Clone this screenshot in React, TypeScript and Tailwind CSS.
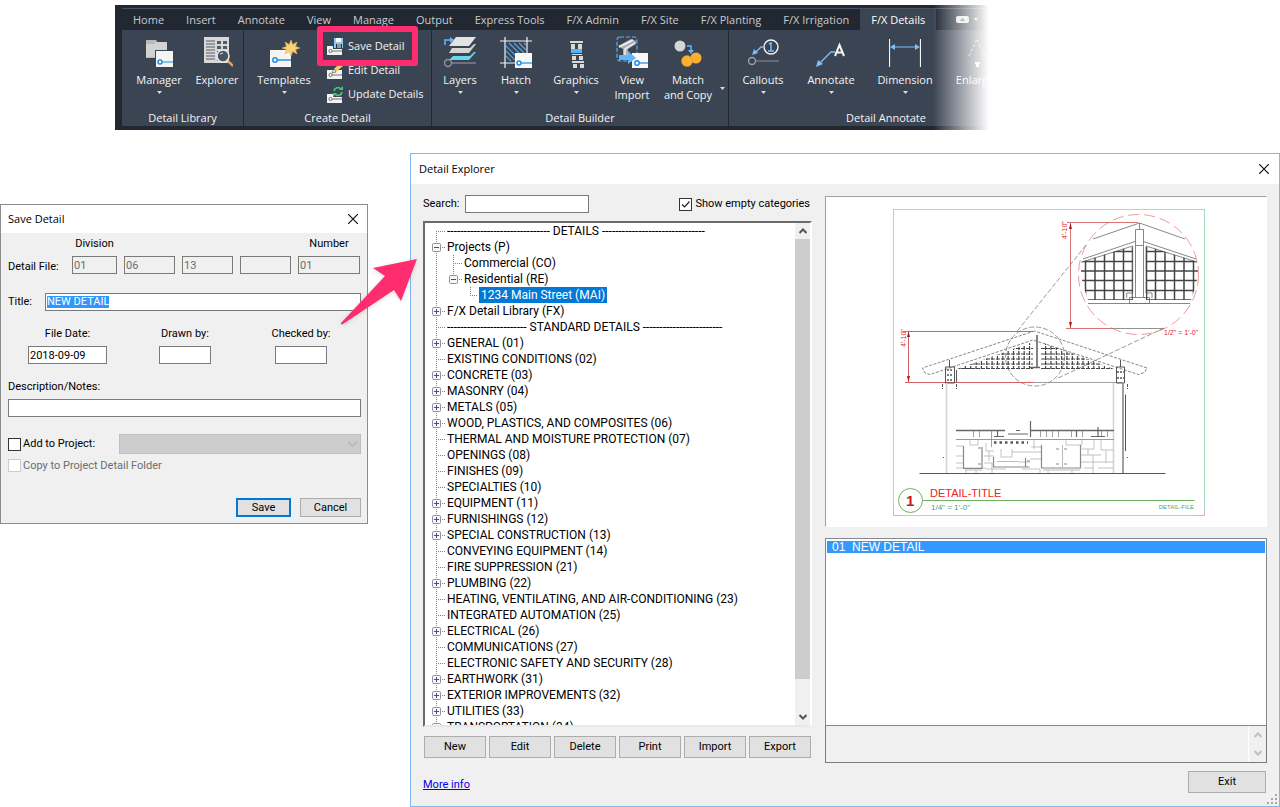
import { useState } from "react";
import type { ReactNode } from "react";

const tabs = [
  "Home",
  "Insert",
  "Annotate",
  "View",
  "Manage",
  "Output",
  "Express Tools",
  "F/X Admin",
  "F/X Site",
  "F/X Planting",
  "F/X Irrigation",
  "F/X Details",
];

type TreeItem = {
  label: string;
  level: number;
  box?: "+" | "-";
  lastChild?: boolean;
};

const treeItems: TreeItem[] = [
  { label: "------------------------------- DETAILS -------------------------------", level: 0 },
  { label: "Projects (P)", level: 0, box: "-" },
  { label: "Commercial (CO)", level: 1 },
  { label: "Residential (RE)", level: 1, box: "-", lastChild: true },
  { label: "1234 Main Street (MAI)", level: 2, lastChild: true },
  { label: "F/X Detail Library (FX)", level: 0, box: "+" },
  { label: "------------------------ STANDARD DETAILS ------------------------", level: 0 },
  { label: "GENERAL (01)", level: 0, box: "+" },
  { label: "EXISTING CONDITIONS (02)", level: 0 },
  { label: "CONCRETE (03)", level: 0, box: "+" },
  { label: "MASONRY (04)", level: 0, box: "+" },
  { label: "METALS (05)", level: 0, box: "+" },
  { label: "WOOD, PLASTICS, AND COMPOSITES (06)", level: 0, box: "+" },
  { label: "THERMAL AND MOISTURE PROTECTION (07)", level: 0 },
  { label: "OPENINGS (08)", level: 0 },
  { label: "FINISHES (09)", level: 0 },
  { label: "SPECIALTIES (10)", level: 0 },
  { label: "EQUIPMENT (11)", level: 0, box: "+" },
  { label: "FURNISHINGS (12)", level: 0, box: "+" },
  { label: "SPECIAL CONSTRUCTION (13)", level: 0, box: "+" },
  { label: "CONVEYING EQUIPMENT (14)", level: 0 },
  { label: "FIRE SUPPRESSION (21)", level: 0 },
  { label: "PLUMBING (22)", level: 0, box: "+" },
  { label: "HEATING, VENTILATING, AND AIR-CONDITIONING (23)", level: 0 },
  { label: "INTEGRATED AUTOMATION (25)", level: 0 },
  { label: "ELECTRICAL (26)", level: 0, box: "+" },
  { label: "COMMUNICATIONS (27)", level: 0 },
  { label: "ELECTRONIC SAFETY AND SECURITY (28)", level: 0 },
  { label: "EARTHWORK (31)", level: 0, box: "+" },
  { label: "EXTERIOR IMPROVEMENTS (32)", level: 0, box: "+" },
  { label: "UTILITIES (33)", level: 0, box: "+" },
  { label: "TRANSPORTATION (34)", level: 0, box: "+" },
];

/* ---------- ribbon icons ---------- */

const Icon = ({ children }: { children: ReactNode }) => (
  <svg width="32" height="32" viewBox="0 0 32 32" fill="none" className="shrink-0">
    {children}
  </svg>
);

const ManagerIcon = () => (
  <Icon>
    <path d="M3 4h10l2 3h9v15H3z" fill="#b9b9b9" />
    <path d="M3 8h8l2-2h11v15H3z" fill="#d2d2d2" />
    <path d="M12 14h19v17H12z" fill="#3b4453" />
    <path d="M13 15h17v16H13z" fill="#f4f4f4" />
    <path d="M19 26h11" stroke="#1f8be0" />
    <circle cx="17" cy="26" r="2" stroke="#1f8be0" strokeWidth="1.5" fill="#fff" />
  </Icon>
);

const ExplorerIcon = () => (
  <Icon>
    <path d="M3 1h25v26H3z" fill="#d8d8d8" />
    <path d="M5 5h9M5 8h9M5 11h9M5 14h9M5 17h9M5 20h9M5 23h9M16 24h4" stroke="#545b68" />
    <path d="M16 5h4v3h-4zM22 5h4v3h-4zM16 10h4v3h-4zM22 10h4v3h-4zM16 15h3v3h-3z" fill="#545b68" />
    <circle cx="22" cy="20" r="6" fill="#4a5361" stroke="#e6e6e6" strokeWidth="1.6" />
    <path d="M19 18l3-1" stroke="#e6e6e6" />
    <path d="M27 25l5 5" stroke="#e8a860" strokeWidth="2.4" />
  </Icon>
);

const TemplatesIcon = () => (
  <Icon>
    <path d="M2 14h21v17H2z" fill="#f4f4f4" />
    <path d="M9 24h14" stroke="#1f8be0" strokeWidth="1.4" />
    <circle cx="7" cy="24" r="2.2" stroke="#1f8be0" strokeWidth="1.5" fill="#fff" />
    <path
      d="M23 4l1.8 4.6L29 6l-1.5 4.4L32 12l-4.5 1.6L29 18l-4.200-2.600L23 20l-1.800-4.600L17 18l1.500-4.400L14 12l4.500-1.600L17 6l4.200 2.600z"
      fill="#f9d275"
      stroke="#e8b04b"
      strokeWidth=".6"
    />
  </Icon>
);

const LayersIcon = () => (
  <Icon>
    <path d="M12 1h20l-7 9H5z" fill="#e3e3e3" />
    <path d="M8 12h18l4-4h2l-7 9H5z" fill="#d6d6d6" />
    <path d="M9 20h17l4-4h2l-7 8H5z" fill="#67d8ee" />
    <path d="M1 9V4h6" stroke="#6ab6f7" strokeWidth="1.5" />
    <path d="M6 1l4 3-4 3z" fill="#6ab6f7" />
    <circle cx="4" cy="27" r="3.500" stroke="#8f959e" strokeWidth="1.4" />
    <path d="M8 27h24" stroke="#9ba0a8" />
  </Icon>
);

const HatchIcon = () => (
  <Icon>
    <path
      d="M6 10l13 13M6 15l9 9M6 20l5 5M9 7l17 17M14 7l12 12M19 7l7 7M24 7l2 2"
      stroke="#5aa4e0"
      strokeWidth="1.2"
    />
    <path d="M5 1v31M0 5h32M27 1v31M0 27h16" stroke="#f4f4f4" strokeWidth="1.2" />
    <path d="M15 17h17v15H15z" fill="#f8f8f8" />
    <path d="M21 27h11" stroke="#1f8be0" strokeWidth="1.2" />
    <circle cx="19" cy="27" r="2" stroke="#1f8be0" strokeWidth="1.4" />
  </Icon>
);

const GraphicsIcon = () => (
  <Icon>
    <path d="M10 5h13v2H10zM11 8h4v5h-4zM18 8h4v5h-4zM12 18h10v1H12zM12 20h4v4h-4zM19 20h4v4h-4zM12 25h12v2H12zM13 28h4v4h-4zM20 28h4v4h-4z" fill="#d9d9d9" />
    <path d="M11 13h11v4H11z" fill="#55b3f7" />
  </Icon>
);

const ViewImportIcon = () => (
  <Icon>
    <path d="M2 10L15 3l5 2v3l-8 5v9H7v-9z" fill="#aeb1b5" />
    <path d="M3 11L17 4M9 22v-9l10-6" stroke="#f2f2f2" strokeWidth="1.4" />
    <rect x="1" y="1" width="20" height="24" rx="3" stroke="#5db0f5" strokeDasharray="4 2" strokeWidth="1.2" />
    <path d="M16 17h16v15H16z" fill="#f8f8f8" />
    <path d="M3 19h9v-4l8 7-8 6v-4H3z" fill="#62b4f8" />
    <path d="M23 27h9" stroke="#1f8be0" strokeWidth="1.2" />
    <circle cx="21" cy="27" r="2.200" stroke="#1f8be0" strokeWidth="1.4" />
  </Icon>
);

const MatchIcon = () => (
  <Icon>
    <circle cx="8" cy="10" r="5.500" fill="#d5d5d5" />
    <path d="M15 10h4v5" stroke="#6ab6f7" strokeWidth="1.4" />
    <path d="M16 14h6l-3 4z" fill="#6ab6f7" />
    <circle cx="24" cy="22" r="5.500" fill="#fbb034" />
    <circle cx="15" cy="25" r="5.500" fill="#fbb034" stroke="#e09420" strokeWidth=".5" />
  </Icon>
);

const CalloutsIcon = () => (
  <Icon>
    <circle cx="24" cy="11" r="7" stroke="#f4f4f4" strokeWidth="1.4" />
    <path d="M22 8l2-1v8M21 15h6" stroke="#7cc0f7" strokeWidth="1.4" />
    <path d="M17 11h-3l-6 6" stroke="#7cc0f7" strokeWidth="1.3" />
    <path d="M5 19l2-6 4 4z" fill="#7cc0f7" />
    <circle cx="5" cy="25" r="3.500" stroke="#9a9fa7" strokeWidth="1.4" />
    <path d="M9 25h23" stroke="#8b919b" />
  </Icon>
);

const AnnotateIcon = () => (
  <Icon>
    <path d="M20 20L24.500 9L29 20M21.500 16.500h6" stroke="#f4f4f4" strokeWidth="2" />
    <path d="M20 16h-4L4 28" stroke="#7cc0f7" strokeWidth="1.3" />
    <path d="M1 31l2-7 5 4z" fill="#7cc0f7" />
  </Icon>
);

const DimensionIcon = () => (
  <Icon>
    <path d="M.5 3v28M31.500 3v28" stroke="#f4f4f4" strokeWidth="1.2" />
    <path d="M3 11h26" stroke="#7cc0f7" />
    <path d="M1 11l5-3v6zM31 11l-5-3v6z" fill="#7cc0f7" />
  </Icon>
);

const EnlargeIcon = () => (
  <Icon>
    <path d="M10 20L18 3l8 17" stroke="#e8d9a8" strokeDasharray="3 2" />
    <path d="M16 26h5v2h-5zM17 28h3v3h-3z" fill="#f4f4f4" />
  </Icon>
);

const SmallDetailIcon = ({ children }: { children: ReactNode }) => (
  <svg width="17" height="17" viewBox="0 0 17 17" fill="none" className="shrink-0">
    <path d="M0 8h15v9H0z" fill="#f2f2f2" />
    <path d="M5 13h10" stroke="#777" />
    <circle cx="3.500" cy="13" r="1.600" stroke="#777" />
    {children}
  </svg>
);

const SaveIcon = () => (
  <SmallDetailIcon>
    <path d="M6 0h11v11H6z" fill="#3b4453" />
    <path d="M7 0h9v10H7z" fill="#8bcaf8" />
    <path d="M9 0h5v4H9z" fill="#fff" />
    <path d="M9 6h6v4H9z" fill="#2b3340" />
    <path d="M10 7h4M10 9h4" stroke="#fff" />
  </SmallDetailIcon>
);

const EditIcon = () => (
  <SmallDetailIcon>
    <path d="M5 11l2-4 6-6 3 3-7 6z" fill="#f3cd63" />
    <path d="M5 11l2-4 2 3z" fill="#fff" stroke="#444" strokeWidth=".6" />
  </SmallDetailIcon>
);

const UpdateIcon = () => (
  <SmallDetailIcon>
    <path d="M6 0h10v11H6z" fill="#3b4453" />
    <path d="M7 5a4 4 0 0 1 7-2M15 6a4 4 0 0 1-7 2" stroke="#43c476" strokeWidth="1.800" />
    <path d="M12 4h4V0zM10 7H6v4z" fill="#43c476" />
  </SmallDetailIcon>
);

/* ---------- ribbon ---------- */

const Caret = () => (
  <svg width="5" height="3" viewBox="0 0 5 3" className="shrink-0">
    <path d="M0 0h5L2.500 3z" fill="#dcdcdc" />
  </svg>
);

const RibbonPanel = ({ title, className, children }: { title: string; className: string; children: ReactNode }) => (
  <section className={`flex shrink-0 flex-col bg-[#3b4453] ${className}`}>
    <div className="flex h-20 items-start pt-1.5">{children}</div>
    <h2 className="text-center leading-4">{title}</h2>
  </section>
);

type RibbonButtonProps = {
  label: string;
  icon: ReactNode;
  width: string;
  caret?: boolean;
};

const RibbonButton = ({ label, icon, width, caret }: RibbonButtonProps) => (
  <button className={`flex shrink-0 flex-col items-center whitespace-pre leading-[15px] hover:bg-white/10 ${width}`}>
    {icon}
    <span className="mt-1">{label}</span>
    {caret && (
      <span className="mt-1">
        <Caret />
      </span>
    )}
  </button>
);

const Ribbon = () => {
  const [activeTab, setActiveTab] = useState("F/X Details");

  return (
    <header className="relative mr-[291px] ml-[115px] overflow-hidden bg-[#212832] pb-1 pl-[7px] font-['Open_Sans','Noto_Sans',sans-serif] text-[11px] text-[#f4f4f4]">
      <div className="h-1 border-b border-[#4b5361]" />
      <nav className="flex h-[21px] items-center">
        {tabs.map((tab) => (
          <button
            key={tab}
            onClick={() => setActiveTab(tab)}
            className={`h-full shrink-0 px-[11px] ${
              tab === activeTab ? "bg-[#3b4453] text-white" : "text-[#c9cbce]"
            }`}
          >
            {tab}
          </button>
        ))}
        <button aria-label="Minimize ribbon" className="ml-5 flex items-center gap-1">
          <svg width="22" height="8" viewBox="0 0 22 8">
            <rect width="13" height="7" rx="2" fill="#e4e4e4" />
            <path d="M4 5l2.500-3L9 5z" fill="#666" />
            <path d="M18 2h4l-2 3z" fill="#e4e4e4" />
          </svg>
        </button>
      </nav>
      <div className="flex h-24 gap-px">
        <RibbonPanel title="Detail Library" className="w-[121px]">
          <div className="flex gap-1 pl-[10px]">
            <RibbonButton label="Manager" icon={<ManagerIcon />} width="w-[54px]" caret />
            <RibbonButton label="Explorer" icon={<ExplorerIcon />} width="w-[54px]" />
          </div>
        </RibbonPanel>
        <RibbonPanel title="Create Detail" className="w-[187px]">
          <div className="flex gap-[13px] pl-[10px]">
            <RibbonButton label="Templates" icon={<TemplatesIcon />} width="w-15" caret />
            <div className="flex flex-col items-start gap-2 pt-0.5">
              <button className="relative flex h-4 items-center gap-1 whitespace-nowrap">
                <SaveIcon />
                Save Detail
                <span className="absolute -inset-y-3 -right-[14px] -left-[10px] z-10 rounded-[3px] border-[6px] border-[#ff2d6f]" />
              </button>
              <button className="flex h-4 items-center gap-1 whitespace-nowrap">
                <EditIcon />
                Edit Detail
              </button>
              <button className="flex h-4 items-center gap-1 whitespace-nowrap">
                <UpdateIcon />
                Update Details
              </button>
            </div>
          </div>
        </RibbonPanel>
        <RibbonPanel title="Detail Builder" className="w-[296px]">
          <RibbonButton label="Layers" icon={<LayersIcon />} width="w-14" caret />
          <RibbonButton label="Hatch" icon={<HatchIcon />} width="w-14" caret />
          <RibbonButton label="Graphics" icon={<GraphicsIcon />} width="w-16" caret />
          <RibbonButton label={"View\nImport"} icon={<ViewImportIcon />} width="w-12" />
          <div className="flex items-end">
            <RibbonButton label={"Match\nand Copy"} icon={<MatchIcon />} width="w-16" />
            <span className="pb-3">
              <Caret />
            </span>
          </div>
        </RibbonPanel>
        <RibbonPanel title="Detail Annotate" className="w-[314px]">
          <RibbonButton label="Callouts" icon={<CalloutsIcon />} width="w-17" caret />
          <RibbonButton label="Annotate" icon={<AnnotateIcon />} width="w-17" caret />
          <RibbonButton label="Dimension" icon={<DimensionIcon />} width="w-20" caret />
          <RibbonButton label="Enlarge" icon={<EnlargeIcon />} width="w-15" />
        </RibbonPanel>
      </div>
      <div className="absolute inset-y-0 right-0 w-14 bg-gradient-to-r from-white/0 to-white" />
    </header>
  );
};

/* ---------- dialogs ---------- */

const CloseButton = () => (
  <button aria-label="Close">
    <svg width="10" height="10" viewBox="0 0 10 10" stroke="#111" strokeWidth="1.200">
      <path d="M0 0l10 10M10 0L0 10" />
    </svg>
  </button>
);

const field = "h-[18px] border border-[#7a7a7a] bg-white px-px outline-none";
const lockedField = "h-[18px] w-full border border-[#7a7a7a] px-px text-[#6d6d6d]";
const pushButton = "border border-[#adadad] bg-[#e1e1e1] text-center hover:bg-[#e5f1fb]";

const SaveDialog = () => (
  <form
    onSubmit={(e) => e.preventDefault()}
    className="mt-[51px] flex w-[368px] shrink-0 flex-col border border-[#8c8c8c] bg-[#f0f0f0]"
  >
    <div className="flex h-7 items-center justify-between bg-white pr-[9px] pl-[7px] font-['Open_Sans','Noto_Sans',sans-serif]">
      <h2>Save Detail</h2>
      <CloseButton />
    </div>

    <div className="flex flex-col pt-[5px] pr-1.5 pb-1.5 pl-[7px] leading-3">
      <div className="grid grid-cols-[57px_45px_51px_51px_51px_62px] items-center gap-x-[7px] gap-y-1.5">
        <label htmlFor="division" className="col-start-2 text-center">Division</label>
        <label htmlFor="number" className="col-start-6 text-center">Number</label>
        <label htmlFor="division" className="col-start-1 whitespace-nowrap pt-1">Detail File:</label>
        <input id="division" disabled defaultValue="01" className={lockedField} />
        <input aria-label="Section" disabled defaultValue="06" className={lockedField} />
        <input aria-label="Subsection" disabled defaultValue="13" className={lockedField} />
        <input aria-label="Suffix" disabled className={lockedField} />
        <input id="number" disabled defaultValue="01" className={lockedField} />
      </div>

      <div className="mt-[19px] flex items-center">
        <label htmlFor="title" className="w-[37px]">Title:</label>
        <div className="flex h-[18px] flex-1 items-center border border-[#7a7a7a] bg-white px-px">
          <input
            id="title"
            defaultValue="NEW DETAIL"
            className="field-sizing-content bg-[#3297fd] text-white outline-none"
          />
        </div>
      </div>

      <div className="mt-[17px] flex pl-5">
        <div className="flex w-[79px] flex-col items-center gap-1.5">
          <label htmlFor="file-date">File Date:</label>
          <input id="file-date" defaultValue="2018-09-09" className={`w-full ${field}`} />
        </div>
        <div className="ml-[52px] flex w-[52px] flex-col items-center gap-1.5 whitespace-nowrap">
          <label htmlFor="drawn-by">Drawn by:</label>
          <input id="drawn-by" className={`w-full ${field}`} />
        </div>
        <div className="ml-16 flex w-[52px] flex-col items-center gap-1.5 whitespace-nowrap">
          <label htmlFor="checked-by">Checked by:</label>
          <input id="checked-by" className={`w-full ${field}`} />
        </div>
      </div>

      <label htmlFor="notes" className="mt-[17px]">Description/Notes:</label>
      <input id="notes" className={`mt-1.5 w-full ${field}`} />

      <div className="mt-[17px] flex items-center justify-between">
        <label className="flex items-center gap-0.5">
          <input type="checkbox" className="size-[13px] appearance-none border border-[#333] bg-white" />
          Add to Project:
        </label>
        <div className="relative">
          <select aria-label="Project" disabled className="block h-5 w-[242px] appearance-none border border-[#bfbfbf] bg-[#cccccc]" />
          <svg width="9" height="5" viewBox="0 0 9 5" fill="none" stroke="#a0a0a0" className="absolute top-2 right-1">
            <path d="M0 0l4.500 4L9 0" />
          </svg>
        </div>
      </div>
      <label className="mt-[5px] flex items-center gap-0.5 text-[#6d6d6d]">
        <input type="checkbox" disabled className="size-[13px] appearance-none border border-[#cccccc] bg-white" />
        Copy to Project Detail Folder
      </label>

      <div className="mt-[26px] flex justify-end gap-[9px]">
        <button type="submit" className="h-[19px] w-[55px] border-2 border-[#0078d7] bg-[#e1e1e1]">Save</button>
        <button type="button" className={`h-[19px] w-[61px] ${pushButton}`}>Cancel</button>
      </div>
    </div>
  </form>
);

/* dotted guides and the expander box in front of a tree row */
const TreeGutter = ({ item, first }: { item: TreeItem; first: boolean }) => {
  const x = 11.5 + item.level * 17;
  const width = 22 + item.level * 17 - (item.level === 2 ? 2 : 0);
  const inProjects = item.level > 0;

  return (
    <svg width={width} height="16" viewBox={`0 0 ${width} 16`} fill="none" className="shrink-0">
      <g stroke="#808080" strokeDasharray="1 1">
        {inProjects && <path d="M11.500 0v16" />}
        <path d={`M${x} ${first ? 8 : 0}V${item.lastChild ? 8 : 16}`} />
        <path d={`M${x - 0.5} 8.500H${width - 1}`} />
      </g>
      {item.box && (
        <>
          <rect x={x - 4} y="4.500" width="8" height="8" rx="1" fill="#f7f7f7" stroke="#919191" />
          <path d={`M${x - 2.5} 8.500h5`} stroke="#35529b" />
          {item.box === "+" && <path d={`M${x} 6v5`} stroke="#35529b" />}
        </>
      )}
    </svg>
  );
};

const Chevron = ({ up, color }: { up?: boolean; color: string }) => (
  <svg width="8" height="6" viewBox="0 0 8 6" fill="none" stroke={color} strokeWidth="2">
    <path d={up ? "M.5 5L4 1.500L7.500 5" : "M.5 1L4 4.500L7.500 1"} />
  </svg>
);

const CategoryTree = () => {
  const [selected, setSelected] = useState("1234 Main Street (MAI)");

  return (
    <div className="mt-2 flex h-[506px] border-2 border-t-[#6b6b6b] border-r-white border-b-[#e8e8e8] border-l-[#6b6b6b] bg-white text-[12px]">
      <ul className="min-w-0 flex-1 overflow-hidden">
        {treeItems.map((item, i) => (
          <li key={item.label} className="flex h-4 items-center">
            <TreeGutter item={item} first={i === 0} />
            <button
              onClick={() => setSelected(item.label)}
              className={`h-4 whitespace-pre leading-4 ${item.level === 2 ? "px-0.5" : ""} ${
                selected === item.label ? "bg-[#0078d7] text-white" : ""
              }`}
            >
              {item.label}
            </button>
          </li>
        ))}
      </ul>
      <div className="flex w-[15px] flex-col items-center bg-[#f0f0f0]">
        <div className="flex h-4 items-center">
          <Chevron up color="#555" />
        </div>
        <div className="h-[440px] w-full bg-[#cdcdcd]" />
        <div className="mt-auto flex h-4 items-center">
          <Chevron color="#555" />
        </div>
      </div>
    </div>
  );
};

const trussColumns = Array.from({ length: 29 }, (_, i) => 134 + i * 5.35);

const DetailDrawing = () => (
  <svg viewBox="0 0 440 329" fill="none" className="h-[329px] w-full font-['Liberation_Sans',Arial,sans-serif]">
    <defs>
      <clipPath id="lens">
        <path d="M255 65L306.700 49V103H262Q257 90 255 78zM371.600 65L320 49V103H365Q370 90 372 78z" />
      </clipPath>
      <clipPath id="truss">
        <path d="M131 172L207 145V172zM215 145L288 172H215z" />
      </clipPath>
    </defs>

    {/* sheet frame */}
    <rect x="67.500" y="12.500" width="311" height="306" stroke="#a5dcbc" />
    <path d="M67.500 312v6.500h7M378.500 312v6.500h-7" stroke="#e3a6dc" />

    {/* enlarged view */}
    <circle cx="312.500" cy="77.500" r="60" stroke="#f39a9a" strokeDasharray="11 5" />
    <g stroke="#6a6a6a" strokeWidth=".8">
      <path d="M267 42L313.500 26L359 42M313.500 26v6" />
      <path d="M309.500 32.500h8V48.500h-8zM309.500 48.500V100M317.500 48.500V100M303.500 100.500h20v6h-20zM262 106.500h102" />
      <path d="M309 44.500L257 62M306.700 49L256 65M317.500 44.500L370 62M320 49L371 65M306.700 49V96h-6v5M320 49v47h6v5" />
    </g>
    <g clipPath="url(#lens)" stroke="#444" strokeWidth="1.500">
      <path d="M259.500 50v54M269 50v54M278.500 50v54M288 50v54M297.500 50v54M306.500 50v54M320.500 50v54M329.500 50v54M339 50v54M348.500 50v54M358 50v54M367.500 50v54" />
      <path d="M250 54.500h130M250 64.500h130M250 74h130M250 83.500h130M250 93.500h130M250 103h130" />
    </g>

    {/* upper dimension */}
    <g stroke="#d05050" strokeWidth=".8">
      <path d="M241 25.500h71M240 131.500h45M244.500 26v105" />
      <path d="M285 131.500h53" stroke="#777" />
    </g>
    <path d="M244.500 26l-1.500 6h3zM244.500 131l-1.500-6h3z" fill="#a32020" />
    <text x="241" y="42" fontSize="7" fill="#e0262b" transform="rotate(-90 241 42)">4'-10"</text>
    <text x="338" y="138" fontSize="7" fill="#e0262b">1/2" = 1'-0"</text>

    {/* lens leaders */}
    <g stroke="#808080" strokeWidth=".8" strokeDasharray="5 2">
      <circle cx="209" cy="159.500" r="29.500" />
      <path d="M260 48L190.500 135M338 131L230 182" />
    </g>

    {/* left dimension */}
    <path d="M77 134.500h130M79 185.500h128M82.500 134v51" stroke="#d05050" strokeWidth=".9" />
    <path d="M82.500 134l-1.500 6h3zM82.500 185l-1.500-6h3z" fill="#a32020" />
    <path d="M207 185.500h89" stroke="#888" strokeWidth=".8" />
    <text x="80" y="150" fontSize="7" fill="#e0262b" transform="rotate(-90 80 150)">4'-10"</text>

    {/* roof */}
    <path
      d="M208.500 134L96.500 171l2.500 5 5 1.500L207 143l105.500 34.500 6-2 2.500-4.500z"
      stroke="#777"
      strokeWidth=".9"
      strokeDasharray="3 1.500"
    />
    <g clipPath="url(#truss)" stroke="#444" strokeDasharray="4 1">
      {trussColumns.map((x) => (
        <path key={x} d={`M${x} 144v28`} strokeWidth="1.200" />
      ))}
      <path d="M130 151.500h158M130 157h158M130 162h158M130 167h158M130 171.500h158" />
    </g>
    <path d="M211 138v32M204 170.500h10" stroke="#666" strokeWidth="1.600" />

    {/* posts */}
    <g stroke="#555">
      <path d="M123.500 163v7M119.500 170h9v16h-9zM130.500 173v12M294.500 163v7M290.500 170h8v16h-8z" />
      <path d="M121 173h6M121 178h6M121 183h6M291 175h7M291 181h7" strokeWidth="1.600" strokeDasharray="2 1" />
      <path d="M116.500 187v5M130.500 187v5M287.500 187v5M301.500 187v5M117.500 260v1M301.500 260v1" strokeDasharray="3 1" />
      <path d="M299.500 197.500V254" />
    </g>
    <path d="M120.500 186v90M287.500 186v90" stroke="#d4d4d4" strokeWidth="1.600" />
    <path d="M297 186v90" stroke="#888" strokeWidth="1.600" />
    <path d="M93.500 276.500h246" stroke="#555" />

    {/* counter */}
    <path d="M130 233.500h49M205 233.500h83" stroke="#666" strokeWidth="1.300" />
    <path d="M130 242.500h158" stroke="#999" />
    <path d="M147.500 234v6M153.500 234v6M165.500 234v16M214.500 234v6M220.500 234v6M226.500 234v6M232.500 234v6M245.500 234v6M256.500 234v6M275.500 234v6M281.500 234v6" stroke="#888" strokeWidth=".8" />
    <path d="M171.500 234v6M250.500 234v6M182 237h20M168 239.500h10M204.500 224v16M265 239.500h14M272 230v9M190 233.500h4" stroke="#666" strokeWidth="1.200" />
    <path d="M168 245.500h34" stroke="#555" strokeWidth="2.500" strokeDasharray="2.500 3" />

    {/* stonework */}
    <g stroke="#b4b4b4" strokeWidth=".8">
      <path d="M130 249h7M130 259h7M130 266h7M130 271h30M144 243v5h8v-5M160 246v8h8M158 259h10M163 254v10M158 266h8v10M175 252v8h11v-8M186 255h29M192 265h12M196 272h18v4M160 272h20M208 243v9M205 250h10M204 262h11" />
      <path d="M240 243v5h16v-5M256 252h12v-9M255 258h20M262 252v6M275 243v10h12M255 265h32M267 258v18M280 254v12M258 271h9M272 271h15M140 273v3M150 273v3M222 273v3M246 273v3" />
    </g>

    {/* cabinets */}
    <g stroke="#888" strokeWidth="1.200">
      <path d="M137.500 249v22.500h18.500V250M215.500 248v23h39V248M167.500 260v10h36M199.500 261v9" />
      <path d="M236.500 248v22M171 264.500h21M139 273h17M217 273h37" stroke="#aaa" strokeWidth=".8" />
      <path d="M152 251h3M152 267h3M230 252h3M238 252h3M230 267h3M238 267h3M201 264h3" strokeWidth="1" />
    </g>

    {/* title mark */}
    <circle cx="84.500" cy="303.500" r="12" stroke="#6fae5c" />
    <path d="M97 303.500h271.500" stroke="#6fae5c" strokeWidth="1.200" />
    <text x="80" y="309" fontSize="15" fontWeight="700" fill="#d01818">1</text>
    <text x="104" y="300" fontSize="11" fill="#ee2222">DETAIL-TITLE</text>
    <text x="105" y="313" fontSize="8" fill="#3fa585">1/4" = 1'-0"</text>
    <text x="368" y="312" fontSize="6" fill="#3fa585" textAnchor="end">DETAIL-FILE</text>
  </svg>
);

const actions = ["New", "Edit", "Delete", "Print", "Import", "Export"];

const DetailExplorer = () => (
  <section className="relative flex min-w-0 flex-1 flex-col border border-[#7db8f0] bg-[#f0f0f0]">
    <div className="flex h-[30px] items-center justify-between bg-white pr-[10px] pl-2 font-['Open_Sans','Noto_Sans',sans-serif]">
      <h2>Detail Explorer</h2>
      <CloseButton />
    </div>

    <div className="flex gap-[13px] px-3">
      <div className="flex w-[389px] shrink-0 flex-col pt-[11px]">
        <div className="flex items-center">
          <label htmlFor="search" className="w-[42px]">Search:</label>
          <input id="search" className={`w-[124px] ${field}`} />
          <label className="ml-auto flex items-center gap-[3px] pr-0.5">
            <span className="relative flex">
              <input type="checkbox" defaultChecked className="peer size-[13px] appearance-none border border-[#333] bg-white" />
              <svg
                viewBox="0 0 13 13"
                fill="none"
                stroke="#222"
                strokeWidth="1.200"
                className="pointer-events-none absolute inset-0 hidden peer-checked:block"
              >
                <path d="M3 6.500L5.500 9L10.500 3.500" />
              </svg>
            </span>
            Show empty categories
          </label>
        </div>
        <CategoryTree />
        <div className="mt-[9px] flex gap-[3px] pl-px">
          {actions.map((action) => (
            <button key={action} className={`h-[22px] w-[62px] ${pushButton}`}>
              {action}
            </button>
          ))}
        </div>
        <a href="#more" className="mt-5 self-start leading-[14px] text-[#0000ee] underline">
          More info
        </a>
      </div>

      <div className="flex min-w-0 flex-1 flex-col pt-3">
        <div className="border border-t-[#a0a0a0] border-r-white border-b-white border-l-[#a0a0a0] bg-white">
          <DetailDrawing />
        </div>
        <ul className="mt-[11px] h-[188px] border border-[#828790] bg-white p-px pt-0.5 font-['Liberation_Sans',Arial,sans-serif] text-[12px]">
          <li>
            <button className="block h-3 w-full whitespace-pre bg-[#3399ff] pl-[5px] text-left leading-3 text-white">
              {"01  NEW DETAIL"}
            </button>
          </li>
        </ul>
        <div className="flex h-[37px] border border-t-0 border-[#7a7a7a]">
          <textarea aria-label="Notes" disabled className="min-w-0 flex-1 resize-none" />
          <div className="flex w-[18px] flex-col items-center justify-between border-l border-white py-1.5">
            <Chevron up color="#bfbfbf" />
            <Chevron color="#bfbfbf" />
          </div>
        </div>
        <button className={`mt-2 mr-px h-[22px] w-[78px] self-end ${pushButton}`}>Exit</button>
      </div>
    </div>

    <svg width="10" height="10" viewBox="0 0 10 10" fill="#a8a8a8" className="absolute right-0.5 bottom-0.5">
      <path d="M8 0h2v2H8zM4 4h2v2H4zM8 4h2v2H8zM0 8h2v2H0zM4 8h2v2H4zM8 8h2v2H8z" />
    </svg>
  </section>
);

const App = () => (
  <div className="min-h-screen bg-white pt-[5px] font-['Roboto',Arial,sans-serif] text-[11px] leading-4 text-black">
    <Ribbon />
    <main className="relative mt-[23px] flex min-h-[654px] items-start gap-[42px]">
      <SaveDialog />
      <div className="flex min-w-0 flex-1 self-stretch">
        <DetailExplorer />
      </div>
      <svg
        width="80"
        height="70"
        viewBox="0 0 80 70"
        className="pointer-events-none absolute top-[103px] left-[340px] drop-shadow-sm"
      >
        <path d="M77 3L33 12l12 8L1 67q-1 2 2 1L54 34l7 11z" fill="#ff2d6f" />
      </svg>
    </main>
  </div>
);

export default App;
